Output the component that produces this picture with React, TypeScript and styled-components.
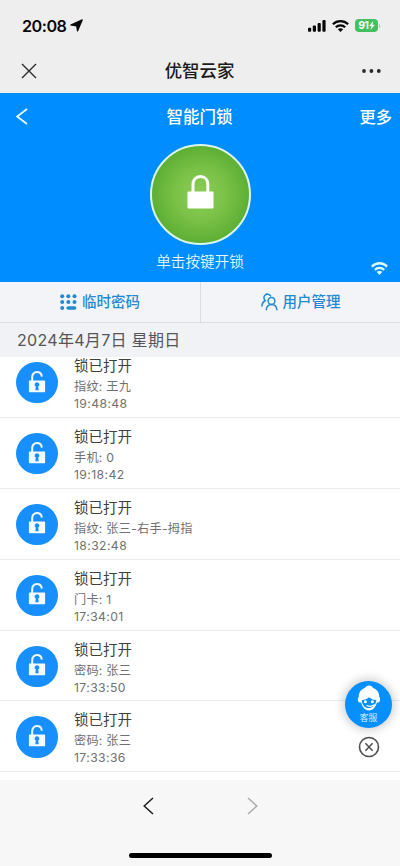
import React from "react";
import styled, { createGlobalStyle } from "styled-components";

const GlobalStyle = createGlobalStyle`
  * { box-sizing: border-box; }
  body {
    margin: 0;
    background: #f7f7f7;
    font-family: Inter, "Noto Sans CJK SC", sans-serif;
  }
  svg { display: block; flex: none; }
  button { border: 0; padding: 0; background: none; font: inherit; color: inherit; }
`;

const Screen = styled.div`
  position: relative;
  display: flex;
  flex-direction: column;
  width: 400px;
  height: 866px;
  overflow: hidden;
  background: #f7f7f7;
`;

const StatusBar = styled.div`
  flex: none;
  height: 50px;
  padding: 1px 20px 0 22px;
  display: flex;
  align-items: center;
  justify-content: space-between;
  background: #eeeeee;
  color: #080808;
`;

const Clock = styled.div`
  display: flex;
  align-items: center;
  gap: 4px;
  font-size: 16.2px;
  font-weight: 600;
  letter-spacing: -0.5px;
  line-height: 20px;
`;

const StatusIcons = styled.div`
  display: flex;
  align-items: center;
  gap: 6px;
`;

const Battery = styled.div`
  display: flex;
  align-items: center;
  gap: 1px;
`;

const BatteryBody = styled.div`
  width: 23px;
  height: 13px;
  border-radius: 4px;
  background: #43c160;
  color: #fff;
  display: flex;
  align-items: center;
  justify-content: center;
  font-size: 10px;
  font-weight: 700;
  line-height: 13px;
  letter-spacing: -0.3px;
`;

const BatteryTip = styled.div`
  width: 1px;
  height: 4px;
  border-radius: 0 1px 1px 0;
  background: #b7c0b8;
`;

const WebHeader = styled.header`
  flex: none;
  height: 43px;
  padding: 0 19px 2px 21px;
  display: grid;
  grid-template-columns: 60px 1fr 60px;
  align-items: center;
  background: #eeeeee;
  color: #1b1b1b;
`;

const WebTitle = styled.div`
  text-align: center;
  margin-right: 3px;
  font-size: 17.4px;
  font-weight: 500;
  line-height: 24px;
`;

const EndSlot = styled.div`
  display: flex;
  justify-content: flex-end;
`;

const Hero = styled.section`
  flex: none;
  height: 189px;
  background: #008dff;
  color: #fff;
`;

const HeroBar = styled.div`
  height: 46px;
  padding: 0 8px 0 16px;
  display: grid;
  grid-template-columns: 60px 1fr 60px;
  align-items: center;
`;

const HeroTitle = styled.div`
  text-align: center;
  margin-right: 9px;
  padding-top: 1px;
  font-size: 16.5px;
  font-weight: 500;
  line-height: 24px;
`;

const MoreButton = styled.button`
  text-align: right;
  padding-top: 1px;
  font-size: 16.3px;
  font-weight: 500;
  line-height: 24px;
`;

const LockButton = styled.button`
  display: flex;
  align-items: center;
  justify-content: center;
  width: 101px;
  height: 101px;
  margin: 5px auto 0;
  padding-bottom: 6px;
  border-radius: 50%;
  border: 2px solid #d9f6ec;
  background: radial-gradient(circle, #8bcc55 0%, #7cc248 35%, #5dae34 72%);
`;

const HeroFoot = styled.div`
  height: 37px;
  padding: 6px 12px 0;
  display: grid;
  grid-template-columns: 40px 1fr 40px;
`;

const LockHint = styled.div`
  text-align: center;
  font-size: 14.6px;
  line-height: 22px;
  font-weight: 350;
  color: #e4f7ff;
`;

const SignalSlot = styled.div`
  display: flex;
  justify-content: flex-end;
  padding-top: 11px;
`;

const Tabs = styled.nav`
  flex: none;
  height: 41px;
  display: grid;
  grid-template-columns: 1fr 1fr;
  background: #f2f4f7;
  border-bottom: 1px solid #dcdee1;
`;

const Tab = styled.button<{ $divided?: boolean }>`
  display: flex;
  align-items: center;
  justify-content: center;
  gap: 5px;
  border-left: ${(p) => (p.$divided ? "1px solid #dadde1" : "0")};
  color: #2589cf;
  font-size: 14.5px;
  font-weight: 500;
  line-height: 20px;
`;

const DateBar = styled.div`
  flex: none;
  height: 34px;
  padding-left: 17px;
  background: #f0f2f5;
  color: #555;
  font-size: 16px;
  line-height: 34px;
  letter-spacing: 0.3px;
`;

const LogViewport = styled.main`
  flex: none;
  height: 423px;
  overflow: hidden;
  background: #fff;
`;

const LogList = styled.ul`
  list-style: none;
  margin: -10px 0 0;
  padding: 0;
`;

const LogRow = styled.li`
  height: 70.9px;
  padding-left: 16px;
  display: flex;
  gap: 16px;
  border-bottom: 1px solid #ebebeb;
`;

const LogBadge = styled.div`
  flex: none;
  width: 41.4px;
  height: 41.4px;
  margin: 15px 0.3px 0;
  border-radius: 50%;
  display: flex;
  align-items: center;
  justify-content: center;
  padding-bottom: 2px;
  background: #188fff;
`;

const LogText = styled.div`
  padding-top: 8px;
  color: #707070;
`;

const LogTitle = styled.div`
  font-size: 14.5px;
  line-height: 21px;
  color: #404040;
`;

const LogDetail = styled.div`
  padding-top: 2px;
  font-size: 12.2px;
  line-height: 18px;
  letter-spacing: 0.25px;
`;

const LogTime = styled.div`
  font-size: 12.2px;
  line-height: 16px;
  letter-spacing: 0.4px;
`;

const Footer = styled.footer`
  flex: 1;
  display: flex;
  flex-direction: column;
  align-items: center;
  justify-content: space-between;
  padding: 17px 0 8px;
  background: #f7f7f7;
`;

const PageArrows = styled.div`
  display: flex;
  gap: 93px;
`;

const HomeIndicator = styled.div`
  width: 143px;
  height: 5px;
  border-radius: 3px;
  background: #000;
`;

const FloatingService = styled.aside`
  position: absolute;
  right: 8px;
  top: 681px;
  width: 47px;
  display: flex;
  flex-direction: column;
  align-items: center;
  gap: 8px;
`;

const ServiceButton = styled.button`
  width: 47px;
  height: 47px;
  border-radius: 50%;
  background: #058fff;
  color: #eaf8ff;
  box-shadow: 0 0 9px 3px rgba(0, 0, 0, 0.17);
  display: flex;
  flex-direction: column;
  align-items: center;
  padding-top: 4px;
  font-size: 8.9px;
  font-weight: 350;
  line-height: 14px;
`;

const ChevronIcon = ({ dir, color, w = 11, h = 18, stroke = 1.5 }: {
  dir: "left" | "right"; color: string; w?: number; h?: number; stroke?: number;
}) => (
  <svg width={w} height={h} viewBox={`0 0 ${w} ${h}`} fill="none" stroke={color} strokeWidth={stroke}>
    <path d={dir === "left" ? `M${w - 1} 1 1.2 ${h / 2} ${w - 1} ${h - 1}` : `M1 1 ${w - 1.2} ${h / 2} 1 ${h - 1}`} />
  </svg>
);

const WifiIcon = ({ width, height, color }: { width: number; height: number; color: string }) => (
  <svg width={width} height={height} viewBox="0 0 17 12" preserveAspectRatio="none">
    <g fill="none" stroke={color} strokeWidth="2.2">
      <path d="M.9 4.3C5.1.1 11.9.1 16.1 4.3" />
      <path d="M3.8 7.3c2.6-2.5 6.8-2.5 9.4 0" />
    </g>
    <path d="M8.5 12 5.8 9.2c1.5-1.4 3.9-1.4 5.4 0z" fill={color} />
  </svg>
);

const LocationIcon = () => (
  <svg width="13" height="13" viewBox="0 0 13 13" fill="#080808" stroke="#080808" strokeWidth="1.2" strokeLinejoin="round">
    <path d="M12.2.9 7.5 12 6.7 6.8.8 6z" />
  </svg>
);

const CellularIcon = () => (
  <svg width="18" height="12" viewBox="0 0 18 12" fill="#080808">
    <rect x="0" y="7.7" width="3.2" height="4.1" rx="1" />
    <rect x="4.8" y="5.4" width="3.2" height="6.4" rx="1" />
    <rect x="9.6" y="2.9" width="3.2" height="8.9" rx="1" />
    <rect x="14.4" y="0" width="3.2" height="11.8" rx="1" />
  </svg>
);

const BoltIcon = () => (
  <svg width="6" height="9" viewBox="0 0 6 9" fill="#fff">
    <path d="M4.3 0 .2 5.1h2.2L1.5 9l4.3-5.3H3.4z" />
  </svg>
);

const CloseIcon = () => (
  <svg width="16" height="16" viewBox="0 0 16 16" stroke="#2b2b2b" strokeWidth="1.4">
    <path d="m1 1 14 14M15 1 1 15" />
  </svg>
);

const DotsIcon = () => (
  <svg width="19" height="4" viewBox="0 0 19 4" fill="#2b2b2b">
    <circle cx="2" cy="2" r="1.9" />
    <circle cx="9.4" cy="2" r="1.9" />
    <circle cx="16.8" cy="2" r="1.9" />
  </svg>
);

const ClosedLockIcon = () => (
  <svg width="27" height="34" viewBox="0 0 27 34">
    <path d="M6 18V9.2C6 4.8 9 1.6 13.4 1.6S20.8 4.8 20.8 9.2V18" fill="none" stroke="#fff" strokeWidth="3" />
    <rect x=".5" y="16.5" width="26" height="17" rx="1" fill="#fff" />
  </svg>
);

const OpenLockIcon = () => (
  <svg width="18" height="24" viewBox="0 0 18 24">
    <path d="M4.2 11V6.9C4.2 4.1 6.1 2.1 8.9 2.1c2.7 0 4.6 1.7 4.9 4.5" fill="none" stroke="#effaff" strokeWidth="2" />
    <path
      d="M1.5 10.4h15q.6 0 .6.6v10.6q0 .6-.6.6h-15q-.6 0-.6-.6V11q0-.6.6-.6z"
      fill="#f4fcff"
    />
    <path d="M9 12.2a2.3 2.3 0 0 0-1.2 4.3l-.5 3.8h3.4l-.5-3.8A2.3 2.3 0 0 0 9 12.2z" fill="#188fff" />
  </svg>
);

const KeypadIcon = () => (
  <svg width="17" height="17" viewBox="0 0 17 17" fill="#2589cf">
    {[2.2, 8.3, 14.5].map((x) => <circle key={x} cx={x} cy="2.2" r="2" />)}
    {[2.2, 8.3, 14.5].map((x) => <circle key={x} cx={x} cy="8" r="2" />)}
    <circle cx="2.2" cy="14" r="2" />
    <rect x="6.4" y="12.2" width="10" height="3.6" rx="1.8" />
  </svg>
);

const UsersIcon = () => (
  <svg width="17" height="18" viewBox="0 0 17 18" fill="none" stroke="#2589cf" strokeWidth="1.5" strokeLinecap="round">
    <circle cx="10.5" cy="8" r="3.4" />
    <path d="M5.3 16.8c.2-3.2 2.2-5.3 5.2-5.3s5.2 2.1 5.4 5.3" />
    <path d="M9.6 2.9A3.6 3.6 0 1 0 4.2 7.5C2.2 8.6 1.1 10.5.9 13" />
  </svg>
);

const AgentIcon = () => (
  <svg width="26" height="26" viewBox="0 0 26 26">
    <path
      d="M13 .5c-2 0-3.5.9-4 2.5C5 4.2 2.7 7.6 2.7 12c-1 .7-1.3 4.3.3 5.2 1 .5 1.7.4 2.1.4C6.3 22.5 9 25.4 13 25.4s6.7-2.9 7.9-7.8c.4 0 1.1.1 2.1-.4 1.6-.9 1.3-4.5.3-5.2 0-4.4-2.3-7.8-6.3-9C16.5 1.4 15 .5 13 .5z"
      fill="#fff"
    />
    <path
      d="M5.7 15.2c3.4-.4 5.8-1.4 7.3-3 1.8 1.6 4.3 2.6 7.3 3-.1 1.6-.7 3.2-1.5 4.4-1.2 2.2-3.3 3.5-5.8 3.5-4.1 0-7-3.2-7.3-7.9z"
      fill="#058fff"
    />
    <circle cx="9.4" cy="16.7" r="1.5" fill="#fff" />
    <circle cx="16.4" cy="16.7" r="1.5" fill="#fff" />
    <path d="M11 20.5c2 1.1 5.2.9 7.4-.7" fill="none" stroke="#fff" strokeWidth="1.2" strokeLinecap="round" />
  </svg>
);

const DismissIcon = () => (
  <svg width="22" height="22" viewBox="0 0 22 22" fill="none" stroke="#4d4d4d">
    <circle cx="11" cy="11" r="9.5" strokeWidth="1.6" />
    <path d="m7.4 7.2 7.2 7.6M14.6 7.2l-7.2 7.6" strokeWidth="1.5" />
  </svg>
);

const entries = [
  { detail: "指纹: 王九", time: "19:48:48" },
  { detail: "手机: 0", time: "19:18:42" },
  { detail: "指纹: 张三-右手-拇指", time: "18:32:48" },
  { detail: "门卡: 1", time: "17:34:01" },
  { detail: "密码: 张三", time: "17:33:50" },
  { detail: "密码: 张三", time: "17:33:36" },
];

export default function App() {
  return (
    <Screen>
      <GlobalStyle />
      <StatusBar>
        <Clock>20:08<LocationIcon /></Clock>
        <StatusIcons>
          <CellularIcon />
          <WifiIcon width={17} height={12} color="#080808" />
          <Battery>
            <BatteryBody>91<BoltIcon /></BatteryBody>
            <BatteryTip />
          </Battery>
        </StatusIcons>
      </StatusBar>
      <WebHeader>
        <CloseIcon />
        <WebTitle>优智云家</WebTitle>
        <EndSlot><DotsIcon /></EndSlot>
      </WebHeader>
      <Hero>
        <HeroBar>
          <ChevronIcon dir="left" color="#e8fbff" w={12} h={17} stroke={1.7} />
          <HeroTitle>智能门锁</HeroTitle>
          <MoreButton>更多</MoreButton>
        </HeroBar>
        <LockButton aria-label="开锁"><ClosedLockIcon /></LockButton>
        <HeroFoot>
          <span />
          <LockHint>单击按键开锁</LockHint>
          <SignalSlot><WifiIcon width={17} height={13} color="#e0fbff" /></SignalSlot>
        </HeroFoot>
      </Hero>
      <Tabs>
        <Tab><KeypadIcon />临时密码</Tab>
        <Tab $divided><UsersIcon />用户管理</Tab>
      </Tabs>
      <DateBar>2024年4月7日 星期日</DateBar>
      <LogViewport>
        <LogList>
          {entries.map((entry) => (
            <LogRow key={entry.time}>
              <LogBadge><OpenLockIcon /></LogBadge>
              <LogText>
                <LogTitle>锁已打开</LogTitle>
                <LogDetail>{entry.detail}</LogDetail>
                <LogTime>{entry.time}</LogTime>
              </LogText>
            </LogRow>
          ))}
        </LogList>
      </LogViewport>
      <Footer>
        <PageArrows>
          <ChevronIcon dir="left" color="#1d1d1d" />
          <ChevronIcon dir="right" color="#ababab" />
        </PageArrows>
        <HomeIndicator />
      </Footer>
      <FloatingService>
        <ServiceButton><AgentIcon />客服</ServiceButton>
        <DismissIcon />
      </FloatingService>
    </Screen>
  );
}
